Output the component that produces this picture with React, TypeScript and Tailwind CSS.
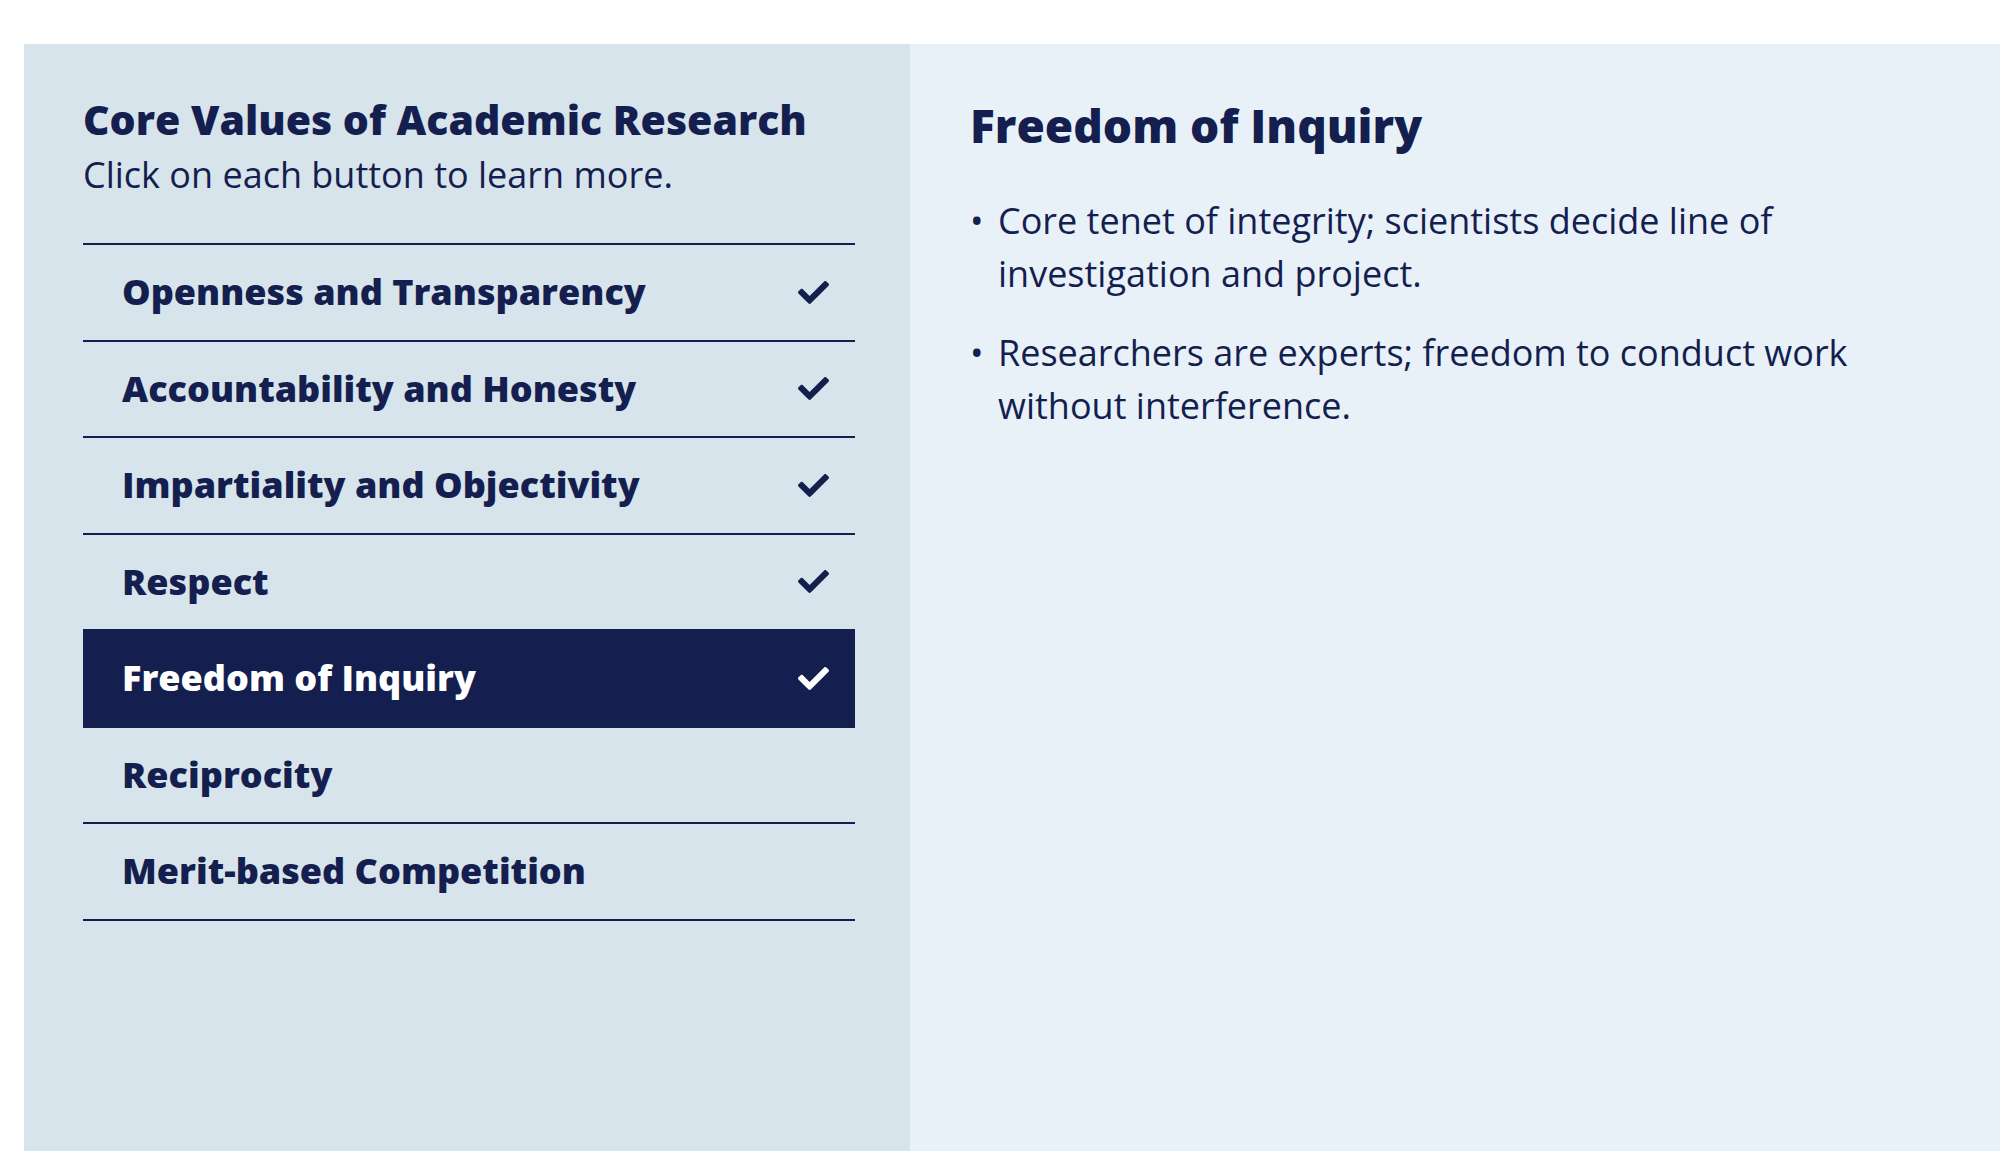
import { useState } from "react";
import { FaCheck } from "react-icons/fa";

type Value = {
  name: string;
  points: string[];
};

const values: Value[] = [
  { name: "Openness and Transparency", points: ["Share methods, data and findings openly."] },
  { name: "Accountability and Honesty", points: ["Take responsibility for research conduct."] },
  { name: "Impartiality and Objectivity", points: ["Avoid bias in design, analysis and reporting."] },
  { name: "Respect", points: ["Respect participants, colleagues and communities."] },
  {
    name: "Freedom of Inquiry",
    points: [
      "Core tenet of integrity; scientists decide line of investigation and project.",
      "Researchers are experts; freedom to conduct work without interference.",
    ],
  },
  { name: "Reciprocity", points: ["Share benefits of research with partners."] },
  { name: "Merit-based Competition", points: ["Funding and recognition based on merit."] },
];

export default function App() {
  const [active, setActive] = useState(4);
  const [seen, setSeen] = useState<number[]>([0, 1, 2, 3, 4]);

  const pick = (i: number) => {
    setActive(i);
    if (!seen.includes(i)) setSeen([...seen, i]);
  };

  const current = values[active];

  return (
    <div className="bg-white pt-[44px] pl-[24px] font-['Open_Sans',sans-serif] text-[#141f4f]">
      <div className="flex h-[1120px]">
        {/* Left: list of values */}
        <div className="w-[886px] shrink-0 bg-[#d8e4eb] pl-[59px] pr-[55px] pt-[49px]">
          <h1 className="text-[41px] font-extrabold leading-[52px]">Core Values of Academic Research</h1>
          <p className="text-[36px] leading-[60px]">Click on each button to learn more.</p>

          <div className="mt-[38px] border-t-2 border-[#141f4f]">
            {values.map((v, i) => {
              const isActive = i === active;
              return (
                <button
                  key={v.name}
                  onClick={() => pick(i)}
                  className={`flex h-[96.5px] w-full items-center justify-between border-b-2 border-[#141f4f] pl-[39px] pr-[26px] text-left text-[36px] font-extrabold ${
                    isActive ? "bg-[#141f4f] text-white" : ""
                  }`}
                >
                  <span>{v.name}</span>
                  {seen.includes(i) && <FaCheck size={31} />}
                </button>
              );
            })}
          </div>
        </div>

        {/* Right: details */}
        <div className="flex-1 bg-[#e9f1f8] pl-[60px] pr-[40px] pt-[52px]">
          <h2 className="text-[46px] font-extrabold leading-[58px]">{current.name}</h2>
          <ul className="mt-[40px] flex flex-col gap-[26px]">
            {current.points.map((p) => (
              <li key={p} className="flex text-[36px] leading-[53px]">
                <span className="w-[28px] shrink-0">•</span>
                <span className="max-w-[900px]">{p}</span>
              </li>
            ))}
          </ul>
        </div>
      </div>
    </div>
  );
}
